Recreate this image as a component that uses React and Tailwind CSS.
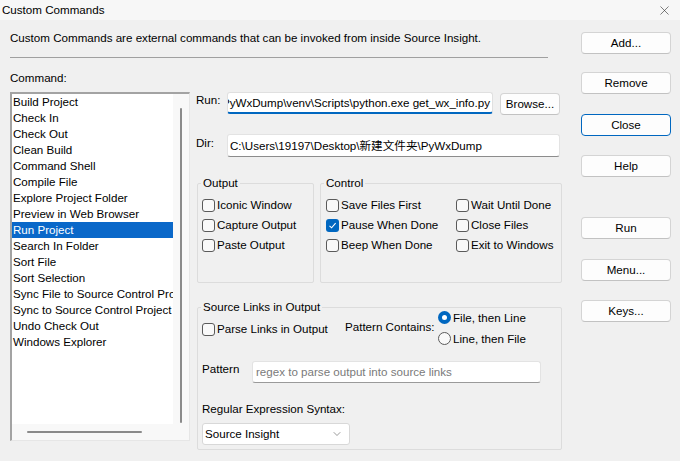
import React from 'react';
import { X, ChevronDown } from 'lucide-react';

const commands = [
  'Build Project',
  'Check In',
  'Check Out',
  'Clean Build',
  'Command Shell',
  'Compile File',
  'Explore Project Folder',
  'Preview in Web Browser',
  'Run Project',
  'Search In Folder',
  'Sort File',
  'Sort Selection',
  'Sync File to Source Control Project',
  'Sync to Source Control Project',
  'Undo Check Out',
  'Windows Explorer',
];

const Checkbox = ({ label, checked }) => (
  <div className="flex items-center h-[20px] whitespace-nowrap">
    {checked ? (
      <span className="w-[13px] h-[13px] rounded-[3px] bg-[#0067c0] flex items-center justify-center shrink-0">
        <svg width="9" height="9" viewBox="0 0 9 9">
          <path d="M1.5 4.8 L3.6 6.8 L7.6 2.2" fill="none" stroke="white" strokeWidth="1.1" />
        </svg>
      </span>
    ) : (
      <span className="w-[13px] h-[13px] rounded-[3px] border border-[#5a5a5a] bg-[#f9f9f9] shrink-0" />
    )}
    <span className="ml-[2px]">{label}</span>
  </div>
);

const Radio = ({ label, checked }) => (
  <div className="flex items-center h-[21px] whitespace-nowrap">
    {checked ? (
      <span className="w-[13px] h-[13px] rounded-full bg-[#0067c0] flex items-center justify-center shrink-0">
        <span className="w-[5px] h-[5px] rounded-full bg-white" />
      </span>
    ) : (
      <span className="w-[13px] h-[13px] rounded-full border border-[#5a5a5a] bg-[#f9f9f9] shrink-0" />
    )}
    <span className="ml-[2px]">{label}</span>
  </div>
);

const Button = ({ children, primary, className = '' }) => (
  <button
    className={`w-[90px] h-[22px] rounded-[4px] bg-[#fdfdfd] border ${
      primary ? 'border-[#0067c0]' : 'border-[#d4d4d4] border-b-[#c2c2c2]'
    } text-black leading-none ${className}`}
  >
    {children}
  </button>
);

const Group = ({ title, className = '', children }) => (
  <fieldset className={`border border-[#dcdcdc] rounded-[2px] ${className}`}>
    <legend className="ml-[3px] px-[2px] leading-[16px]">{title}</legend>
    {children}
  </fieldset>
);

export default function App() {
  return (
    <div
      className="w-[680px] h-[461px] bg-[#f0f0f0] text-[11.6px] leading-[16px] text-black overflow-hidden"
      style={{ fontFamily: '"Liberation Sans", "Noto Sans CJK SC", sans-serif' }}
    >
      {/* title bar */}
      <div className="h-[20px] bg-[#f7f7f7] flex items-center justify-between pl-[2px] pr-[8px]">
        <span>Custom Commands</span>
        <X size={15} strokeWidth={1} className="text-[#333]" />
      </div>

      <div className="flex">
        <div className="w-[581px] shrink-0 pl-[10px]">
          <p className="mt-[10px] whitespace-nowrap">
            Custom Commands are external commands that can be invoked from inside Source Insight.
          </p>
          <div className="mt-[11px] w-[538px] h-px bg-[#a0a0a0]" />
          <div className="mt-[12px]">Command:</div>

          <div className="mt-[6px] flex">
            {/* command list */}
            <div className="w-[180px] h-[349px] bg-white border-t-2 border-l-2 border-[#a3a3a3] border-r border-b border-r-[#e6e6e6] border-b-[#e6e6e6] flex">
              <div className="flex-1 flex flex-col min-w-0">
                <div className="flex-1 overflow-hidden">
                  {commands.map((c) => (
                    <div
                      key={c}
                      className={`pl-[1px] h-[16px] whitespace-nowrap overflow-hidden ${
                        c === 'Run Project' ? 'bg-[#0a68c9] text-white' : ''
                      }`}
                    >
                      {c}
                    </div>
                  ))}
                </div>
                <div className="h-[16px] bg-[#f8f8f8] flex items-center">
                  <div className="ml-[15px] w-[115px] h-[2px] rounded bg-[#8a8a8a]" />
                </div>
              </div>
              <div className="w-[16px] bg-[#f8f8f8] flex flex-col items-center">
                <div className="mt-[14px] h-[315px] w-[2px] rounded bg-[#8a8a8a]" />
              </div>
            </div>

            {/* right panel */}
            <div className="ml-[6px] w-[366px]">
              <div className="flex items-start">
                <span className="w-[31px]">Run:</span>
                <div className="w-[266px] h-[22px] bg-white rounded-[3px] border border-[#e0e0e0] border-b-2 border-b-[#0067c0] flex justify-end items-center overflow-hidden pr-[2px]">
                  <span className="whitespace-nowrap">
                    C:\Users\19197\Desktop\新建文件夹\PyWxDump\venv\Scripts\python.exe get_wx_info.py
                  </span>
                </div>
                <button className="ml-[7px] mt-[1px] w-[60px] h-[22px] rounded-[4px] bg-[#fdfdfd] border border-[#d4d4d4] border-b-[#c2c2c2] leading-none">
                  Browse...
                </button>
              </div>

              <div className="mt-[19px] flex items-start">
                <span className="w-[31px] pt-[1px]">Dir:</span>
                <div className="w-[333px] h-[23px] bg-white rounded-[3px] border border-[#e3e3e3] border-b-[#8c8c8c] flex items-center pl-[2px] whitespace-nowrap overflow-hidden">
                  C:\Users\19197\Desktop\新建文件夹\PyWxDump
                </div>
              </div>

              <div className="mt-[18px] flex">
                <Group title="Output" className="ml-[1px] w-[117px] h-[108px]">
                  <div className="pl-[4px] pt-[4px]">
                    <Checkbox label="Iconic Window" />
                    <Checkbox label="Capture Output" />
                    <Checkbox label="Paste Output" />
                  </div>
                </Group>
                <Group title="Control" className="ml-[6px] w-[242px] h-[108px]">
                  <div className="pl-[5px] pt-[4px] grid grid-cols-[130px_1fr]">
                    <Checkbox label="Save Files First" />
                    <Checkbox label="Wait Until Done" />
                    <Checkbox label="Pause When Done" checked />
                    <Checkbox label="Close Files" />
                    <Checkbox label="Beep When Done" />
                    <Checkbox label="Exit to Windows" />
                  </div>
                </Group>
              </div>

              <Group title="Source Links in Output" className="mt-[16px] ml-[1px] w-[365px] h-[151px]">
                <div className="pl-[4px]">
                  <div className="flex items-start">
                    <div className="w-[143px] mt-[4px]">
                      <Checkbox label="Parse Links in Output" />
                    </div>
                    <span className="w-[93px] mt-[4px] whitespace-nowrap">Pattern Contains:</span>
                    <div className="mt-[-8px]">
                      <Radio label="File, then Line" checked />
                      <Radio label="Line, then File" />
                    </div>
                  </div>

                  <div className="mt-[12px] flex items-start">
                    <span className="w-[50px]">Pattern</span>
                    <div className="w-[289px] h-[22px] bg-white rounded-[3px] border border-[#e3e3e3] border-b-[#9a9a9a] flex items-center pl-[3px] text-[#7a7a7a] whitespace-nowrap">
                      regex to parse output into source links
                    </div>
                  </div>

                  <div className="mt-[18px]">Regular Expression Syntax:</div>
                  <div className="mt-[6px] w-[148px] h-[22px] bg-white rounded-[3px] border border-[#d8d8d8] flex items-center justify-between pl-[2px] pr-[6px]">
                    <span>Source Insight</span>
                    <ChevronDown size={12} strokeWidth={1.2} className="text-[#555]" />
                  </div>
                </div>
              </Group>
            </div>
          </div>
        </div>

        {/* button column */}
        <div className="w-[90px] pt-[12px] flex flex-col">
          <Button>Add...</Button>
          <Button className="mt-[18px]">Remove</Button>
          <Button primary className="mt-[20px]">Close</Button>
          <Button className="mt-[19px]">Help</Button>
          <Button className="mt-[40px]">Run</Button>
          <Button className="mt-[20px]">Menu...</Button>
          <Button className="mt-[19px]">Keys...</Button>
        </div>
      </div>
    </div>
  );
}
